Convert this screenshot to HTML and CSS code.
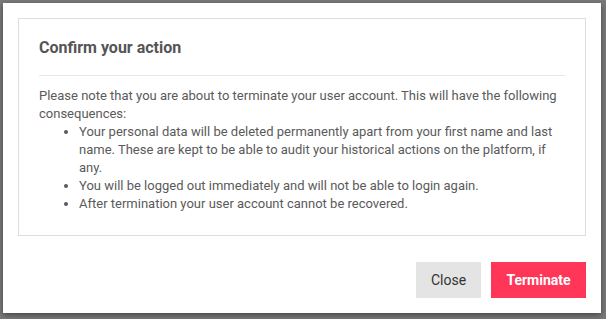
FILE: index.html
```html
<!DOCTYPE html>
<html lang="en">
<head>
    <meta charset="UTF-8">
    <meta name="viewport" content="width=device-width, initial-scale=1.0">
    <title>Confirm your action</title>
    <link rel="stylesheet" href="styles.css">
</head>
<body>
    <div class="modal">
        <div class="modal-panel">
            <h2 class="modal-title">Confirm your action</h2>
            <div class="modal-body">
                <p>Please note that you are about to terminate your user account. This will have the following consequences:</p>
                <ul>
                    <li>Your personal data will be deleted permanently apart from your first name and last name. These are kept to be able to audit your historical actions on the platform, if any.</li>
                    <li>You will be logged out immediately and will not be able to login again.</li>
                    <li>After termination your user account cannot be recovered.</li>
                </ul>
            </div>
        </div>
        <div class="modal-actions">
            <button type="button" class="close-btn">Close</button>
            <button type="button" class="terminate-btn">Terminate</button>
        </div>
    </div>
</body>
</html>
```
FILE: styles.css
```css
body {
    margin: 0;
    padding: 3px 5px 6px 3px;
    background: #7a7a7a;
    font-family: Roboto, 'Liberation Sans', sans-serif;
    color: #555;
}

.modal {
    background: #fff;
    box-shadow: 0 2px 6px rgba(0, 0, 0, 0.45);
    padding: 15px 15px 14px 15px;
    height: 281px;
}

.modal-panel {
    border: 1px solid #dedede;
    padding: 20px 20px 22px 20px;
}

.modal-title {
    margin: 0;
    font-size: 16px;
    line-height: 18px;
    font-weight: 700;
    color: #555;
    padding-bottom: 18px;
    border-bottom: 1px solid #e6e6e6;
}

.modal-body {
    font-size: 13px;
    line-height: 18px;
    margin-top: 11px;
    color: #5a5a5a;
}

.modal-body p {
    margin: 0;
}

.modal-body ul {
    margin: 0;
    padding-left: 40px;
}

.modal-actions {
    display: flex;
    justify-content: flex-end;
    gap: 10px;
    margin-top: 26px;
}

.close-btn, .terminate-btn {
    border: none;
    border-radius: 0;
    height: 36px;
    font-family: inherit;
    font-size: 14px;
    cursor: pointer;
}

.close-btn {
    width: 65px;
    background: #e4e4e4;
    color: #333;
}

.terminate-btn {
    width: 95px;
    background: #ff3658;
    color: #fff;
    font-weight: 700;
}
```
